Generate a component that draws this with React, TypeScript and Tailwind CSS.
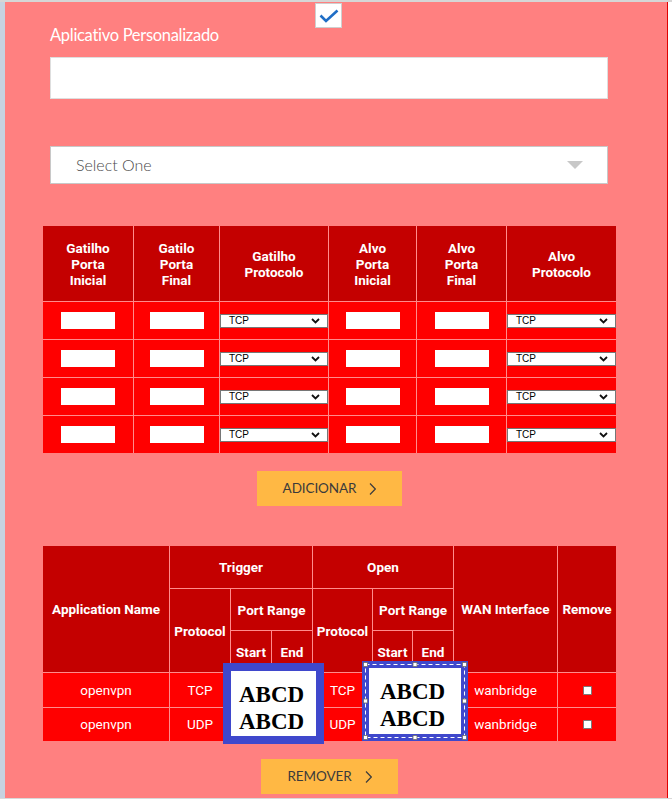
import React from "react";

function TopCheck() {
  return (
    <div className="absolute left-[310px] top-[1px] w-[27px] h-[25px] bg-white border border-[#cfcfcf] flex items-center justify-center">
      <svg width="20" height="14" viewBox="0 0 20 14" fill="none">
        <path d="M1.5 6.5 L7 12 L18.5 1.5" stroke="#1f6ec6" strokeWidth="2.6" strokeLinejoin="miter" />
      </svg>
    </div>
  );
}

function Chevron() {
  return (
    <svg width="7" height="12" viewBox="0 0 7 12" fill="none">
      <path d="M1 0.5 L6.3 6 L1 11.5" stroke="#3d3d3d" strokeWidth="1.2" />
    </svg>
  );
}

function OrangeButton({ label }: { label: string }) {
  return (
    <button className="self-center h-[35px] px-[26px] bg-[#ffb844] flex items-center gap-[13px] text-[13.5px] leading-none text-[#3b3b3b] font-[Lato,sans-serif] tracking-[-0.1px]">
      <span>{label}</span>
      <Chevron />
    </button>
  );
}

function MiniSelect() {
  return (
    <div className="w-full h-[14px] bg-white border border-[#767676] flex items-center justify-between pl-[8px] pr-[7px]">
      <span className="text-[10px] leading-none text-black font-['Liberation_Sans',Arial,sans-serif]">TCP</span>
      <svg width="9" height="6" viewBox="0 0 9 6" fill="none">
        <path d="M1 1 L4.5 4.5 L8 1" stroke="#111" strokeWidth="1.8" />
      </svg>
    </div>
  );
}

const th =
  "bg-[#c40000] flex flex-col items-center justify-center text-center text-white font-bold text-[13.5px] leading-[16px] font-[Roboto,sans-serif]";
const td = "bg-[#ff0000] flex items-center justify-center";
const td2 =
  "bg-[#ff0000] flex items-center justify-center text-white text-[13.5px] font-[Roboto,sans-serif]";

function TriggerTable() {
  const headers = [
    ["Gatilho", "Porta", "Inicial"],
    ["Gatilo", "Porta", "Final"],
    ["Gatilho", "Protocolo"],
    ["Alvo", "Porta", "Inicial"],
    ["Alvo", "Porta", "Final"],
    ["Alvo", "Protocolo"],
  ];
  const rows = [0, 1, 2, 3];
  return (
    <div className="mt-[42px] w-[573px] grid grid-cols-[90px_85px_108px_87px_89px_109px] grid-rows-[75px_37px_37px_37px_37px] gap-px bg-[#ff8c8c]">
      {headers.map((h, i) => (
        <div key={i} className={th}>
          {h.map((w) => (
            <span key={w}>{w}</span>
          ))}
        </div>
      ))}
      {rows.map((r) => (
        <React.Fragment key={r}>
          <div className={td}>
            <input type="text" className="w-[54px] h-[17px] bg-white" />
          </div>
          <div className={td}>
            <input type="text" className="w-[54px] h-[17px] bg-white" />
          </div>
          <div className={td}>
            <MiniSelect />
          </div>
          <div className={td}>
            <input type="text" className="w-[54px] h-[17px] bg-white" />
          </div>
          <div className={td}>
            <input type="text" className="w-[54px] h-[17px] bg-white" />
          </div>
          <div className={td}>
            <MiniSelect />
          </div>
        </React.Fragment>
      ))}
    </div>
  );
}

function RemoveBox() {
  return <div className="w-[9px] h-[9px] bg-white border border-[#7a7a7a] rounded-[1px]" />;
}

function RulesTable() {
  const data = [
    ["openvpn", "TCP", "TCP", "wanbridge"],
    ["openvpn", "UDP", "UDP", "wanbridge"],
  ];
  return (
    <div className="relative mt-[40px] w-[573px]">
      <div className="grid grid-cols-[126px_60px_40px_40px_59px_39px_40px_103px_58px] grid-rows-[42px_41px_41px_34px_33px] gap-px bg-[#ff8c8c]">
        <div className={`${th} row-span-3`}>Application Name</div>
        <div className={`${th} col-span-3`}>Trigger</div>
        <div className={`${th} col-span-3`}>Open</div>
        <div className={`${th} row-span-3`}>WAN Interface</div>
        <div className={`${th} row-span-3`}>Remove</div>
        <div className={`${th} row-span-2`}>Protocol</div>
        <div className={`${th} col-span-2`}>Port Range</div>
        <div className={`${th} row-span-2`}>Protocol</div>
        <div className={`${th} col-span-2`}>Port Range</div>
        <div className={th}>Start</div>
        <div className={th}>End</div>
        <div className={th}>Start</div>
        <div className={th}>End</div>
        {data.map((r, i) => (
          <React.Fragment key={i}>
            <div className={td2}>{r[0]}</div>
            <div className={td2}>{r[1]}</div>
            <div className={td2}></div>
            <div className={td2}></div>
            <div className={td2}>{r[2]}</div>
            <div className={td2}></div>
            <div className={td2}></div>
            <div className={td2}>{r[3]}</div>
            <div className={td2}>
              <RemoveBox />
            </div>
          </React.Fragment>
        ))}
      </div>

      {/* pasted picture 1 */}
      <div className="absolute left-[180px] top-[117px] w-[101px] h-[81px] border-[8px] border-[#3f48cc] bg-white pl-[8px] pt-[10px] font-['Liberation_Serif',serif] font-bold text-[23px] leading-[27px] text-black">
        <div>ABCD</div>
        <div>ABCD</div>
      </div>

      {/* pasted picture 2 (selected) */}
      <div className="absolute left-[319px] top-[115px] w-[106px] h-[80px] border-[7px] border-[#3f48cc] bg-white pl-[11px] pt-[10px] font-['Liberation_Serif',serif] font-bold text-[23px] leading-[27px] text-black">
        <div>ABCD</div>
        <div>ABCD</div>
      </div>
      <svg
        className="absolute left-[319px] top-[115px]"
        width="106"
        height="80"
        viewBox="0 0 106 80"
        fill="none"
      >
        <rect x="3.5" y="3.5" width="99" height="73" stroke="#ffffff" strokeWidth="1" strokeDasharray="4 3" />
        {[
          [3.5, 3.5],
          [53, 3.5],
          [102.5, 3.5],
          [3.5, 40],
          [102.5, 40],
          [3.5, 76.5],
          [53, 76.5],
          [102.5, 76.5],
        ].map(([x, y], i) => (
          <rect key={i} x={x - 2} y={y - 2} width="4" height="4" fill="#ffffff" stroke="#6b6b6b" strokeWidth="0.8" />
        ))}
      </svg>
    </div>
  );
}

export default function App() {
  return (
    <div className="w-[672px] h-[808px] bg-white relative overflow-hidden">
      <div className="h-[2px] bg-[#d6d6d6]" />
      <div className="flex h-[796px]">
        <div className="w-[5px] bg-[#c7d2e0]" />
        <div className="relative w-[663px] bg-[#ff8080] border-r border-[#e00000] pl-[38px]">
          <TopCheck />
          <div className="w-[573px] flex flex-col">
            <label className="mt-[23px] ml-[7px] text-white text-[16.5px] leading-[20px] font-[Lato,sans-serif] font-normal tracking-[-0.3px]">
              Aplicativo Personalizado
            </label>
            <input
              type="text"
              className="mt-[12px] ml-[7px] w-[558px] h-[42px] bg-white border border-[#dedede]"
            />
            <div className="mt-[47px] ml-[7px] w-[558px] h-[38px] bg-white border border-[#c8c8c8] flex items-center justify-between pl-[25px] pr-[24px]">
              <span className="text-[#4a4a4a] text-[16px] leading-none font-[Lato,sans-serif] font-light">
                Select One
              </span>
              <svg width="16" height="8" viewBox="0 0 16 8">
                <polygon points="0,0 16,0 8,8" fill="#c8c8c8" />
              </svg>
            </div>
            <TriggerTable />
            <div className="mt-[18px] flex justify-center">
              <OrangeButton label="ADICIONAR" />
            </div>
            <RulesTable />
            <div className="mt-[18px] flex justify-center">
              <OrangeButton label="REMOVER" />
            </div>
          </div>
        </div>
      </div>
      <div className="h-px bg-[#d9d9d9]" />
    </div>
  );
}
